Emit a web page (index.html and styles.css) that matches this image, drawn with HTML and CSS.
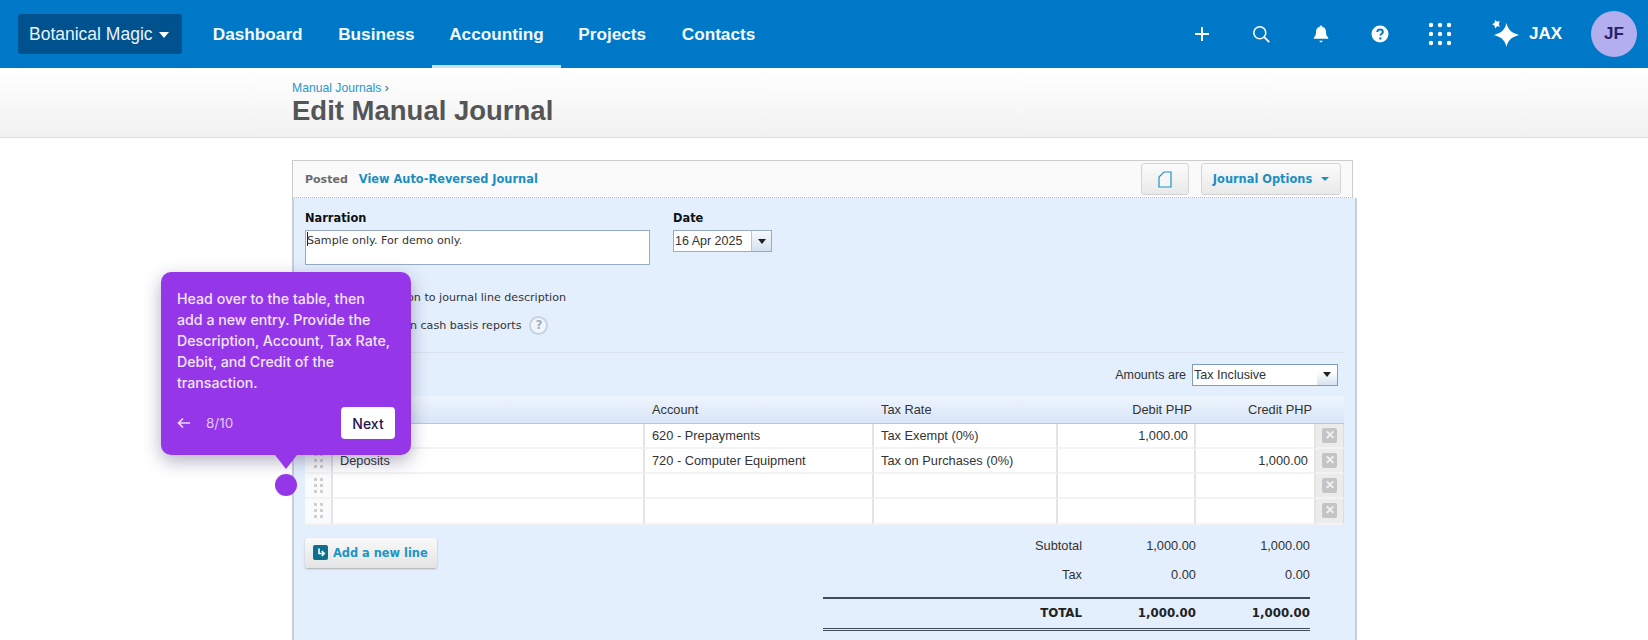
FILE: index.html
```html
<!DOCTYPE html>
<html lang="en">
<head>
<meta charset="utf-8">
<title>Edit Manual Journal</title>
<link rel="stylesheet" href="styles.css">
</head>
<body>
<header class="nav">
  <button class="org">Botanical Magic <span class="org-caret"></span></button>
  <nav class="menu">
    <a class="menu-item">Dashboard</a>
    <a class="menu-item">Business</a>
    <a class="menu-item active">Accounting</a>
    <a class="menu-item">Projects</a>
    <a class="menu-item">Contacts</a>
  </nav>
  <div class="tools">
    <svg class="tool t-plus" width="18" height="18" viewBox="0 0 18 18"><path d="M9 2v14M2 9h14" stroke="#fff" stroke-width="2" fill="none"/></svg>
    <svg class="tool t-search" width="20" height="20" viewBox="0 0 20 20"><circle cx="8.8" cy="8.8" r="6" stroke="#fff" stroke-width="1.6" fill="none"/><path d="M13.2 13.2l5 5" stroke="#fff" stroke-width="1.8" fill="none"/></svg>
    <svg class="tool t-bell" width="18" height="20" viewBox="0 0 18 20"><path d="M9 1.5c.8 0 1.3.6 1.3 1.3 2.6.6 3.7 2.6 3.7 5.2 0 3 .8 4.2 2.2 5.6v1.2H1.8v-1.2C3.200 12.200 4 11 4 8c0-2.600 1.100-4.600 3.700-5.200C7.700 2.100 8.200 1.500 9 1.500z" fill="#fff"/><path d="M7.300 16.800h3.400c-.2.900-.9 1.500-1.700 1.500s-1.500-.6-1.700-1.500z" fill="#fff"/></svg>
    <svg class="tool t-help" width="18" height="18" viewBox="0 0 18 18"><circle cx="9" cy="9" r="8.500" fill="#fff"/><path d="M6.300 7c.1-1.600 1.200-2.400 2.700-2.400s2.800.9 2.800 2.300c0 1.900-2.400 1.900-2.400 3.700" stroke="#0078c8" stroke-width="2" fill="none"/><circle cx="9.300" cy="13.400" r="1.200" fill="#0078c8"/></svg>
    <svg class="tool t-grid" width="24" height="24" viewBox="0 0 24 24" fill="#fff"><circle cx="3" cy="3" r="2.200"/><circle cx="12" cy="3" r="2.200"/><circle cx="21" cy="3" r="2.200"/><circle cx="3" cy="12" r="2.200"/><circle cx="12" cy="12" r="2.200"/><circle cx="21" cy="12" r="2.200"/><circle cx="3" cy="21" r="2.200"/><circle cx="12" cy="21" r="2.200"/><circle cx="21" cy="21" r="2.200"/></svg>
    <svg class="tool t-spark" width="28" height="28" viewBox="0 0 28 28" fill="#fff"><path d="M15.500 3c1.500 6.500 4.500 9.800 12.500 12-8 2.200-11 5.500-12.500 12-1.500-6.500-4.500-9.800-12.500-12 8-2.200 11-5.500 12.500-12z"/><path d="M4 0l1.800 1.500L8.800 1.200 7.700 4.300 9 6.500 6 6.200 4.300 8.500 3.400 5.500 1 4.200 3.600 3z"/></svg>
    <span class="jax">JAX</span>
    <span class="avatar">JF</span>
  </div>
</header>

<section class="pagehead">
  <div class="crumb"><a>Manual Journals</a> <span>›</span></div>
  <h1 class="title">Edit Manual Journal</h1>
</section>

<main class="main">
  <div class="toolbar">
    <span class="status">Posted</span>
    <a class="link">View Auto-Reversed Journal</a>
    <button class="btn btn-doc"><svg width="14" height="17" viewBox="0 0 14 17"><path d="M6 1h7v15H1V6z" fill="#f6f6f6" stroke="#1b95c6" stroke-width="1.200"/></svg></button>
    <button class="btn btn-options">Journal Options <span class="blue-caret"></span></button>
  </div>

  <div class="panel">
    <div class="fields">
      <div class="field">
        <label class="label">Narration</label>
        <div class="textarea"><span class="caret"></span>Sample only. For demo only.</div>
      </div>
      <div class="field">
        <label class="label">Date</label>
        <div class="date"><span class="date-val">16 Apr 2025</span><span class="date-btn"><span class="dark-caret"></span></span></div>
      </div>
    </div>

    <div class="check check-one"><span class="box"></span>Default narration to journal line description</div>
    <div class="check check-two"><span class="box"></span>Show journal on cash basis reports <span class="qmark">?</span></div>

    <div class="amounts">
      <span>Amounts are</span>
      <div class="select"><span>Tax Inclusive</span><span class="select-btn"><span class="dark-caret"></span></span></div>
    </div>

    <div class="grid-wrap">
      <div class="row head">
        <div class="c"></div><div class="c">Description</div><div class="c">Account</div><div class="c">Tax Rate</div><div class="c num">Debit PHP</div><div class="c num">Credit PHP</div><div class="c"></div>
      </div>
      <div class="row line">
        <div class="c handle"><i></i></div><div class="c">Prepayment</div><div class="c">620 - Prepayments</div><div class="c">Tax Exempt (0%)</div><div class="c num">1,000.00</div><div class="c num"></div><div class="c del"><b>✕</b></div>
      </div>
      <div class="row line">
        <div class="c handle"><i></i></div><div class="c">Deposits</div><div class="c">720 - Computer Equipment</div><div class="c">Tax on Purchases (0%)</div><div class="c num"></div><div class="c num">1,000.00</div><div class="c del"><b>✕</b></div>
      </div>
      <div class="row line">
        <div class="c handle"><i></i></div><div class="c"></div><div class="c"></div><div class="c"></div><div class="c num"></div><div class="c num"></div><div class="c del"><b>✕</b></div>
      </div>
      <div class="row line">
        <div class="c handle"><i></i></div><div class="c"></div><div class="c"></div><div class="c"></div><div class="c num"></div><div class="c num"></div><div class="c del"><b>✕</b></div>
      </div>
    </div>

    <div class="below">
      <button class="add"><svg width="15" height="15" viewBox="0 0 15 15"><rect width="15" height="15" rx="2" fill="#0e6f8f"/><path d="M6 3.500v5h5M8.800 6l2.500 2.500-2.500 2.500" stroke="#fff" stroke-width="1.600" fill="none"/></svg>Add a new line</button>
      <div class="totals">
        <div class="t-row"><span>Subtotal</span><span>1,000.00</span><span>1,000.00</span></div>
        <div class="t-row"><span>Tax</span><span>0.00</span><span>0.00</span></div>
        <div class="t-row t-total"><span>TOTAL</span><span>1,000.00</span><span>1,000.00</span></div>
      </div>
    </div>
  </div>
</main>

<aside class="tip">
  <p class="tip-text">Head over to the table, then add a new entry. Provide the Description, Account, Tax Rate, Debit, and Credit of the transaction.</p>
  <div class="tip-foot">
    <svg width="14" height="12" viewBox="0 0 14 12"><path d="M6 1.500L1.500 6 6 10.500M1.500 6H13" stroke="#ecd9fb" stroke-width="1.700" fill="none"/></svg>
    <span class="tip-count">8/10</span>
    <button class="tip-next">Next</button>
  </div>
</aside>
<span class="tip-tail"></span>
<span class="tip-dot"></span>
</body>
</html>
```
FILE: styles.css
```css
* { box-sizing: border-box; }
html, body { margin: 0; padding: 0; height: 640px; overflow: hidden; background: #fff; }
body { font-family: "Liberation Sans", Arial, sans-serif; color: #333; position: relative; }
button { font-family: inherit; cursor: pointer; }

.nav { height: 68px; background: #0078c8; display: flex; align-items: center; padding-left: 18px; color: #fff; }
.org { width: 164px; height: 40px; background: #00528f; border: 0; border-radius: 3px; color: #e8f2fa; font-size: 17.5px; text-align: left; padding: 1px 0 0 11px; display: flex; align-items: center; gap: 6px; white-space: nowrap; }
.org-caret { width: 0; height: 0; border: 5.500px solid transparent; border-top: 6px solid #fff; border-bottom: 0; }
.menu { display: flex; height: 68px; margin-left: 13px; }
.menu-item { display: flex; align-items: center; padding: 0 17.800px; font-weight: 700; font-size: 17.200px; color: #f2f8fc; height: 68px; white-space: nowrap; }
.menu-item.active { box-shadow: inset 0 -3px 0 #c8e0f6; padding: 0 16.800px; }
.tools { margin-left: auto; display: flex; align-items: center; height: 68px; padding-right: 11px; }
.tool { display: block; flex: none; }
.t-plus { margin-right: 40px; }
.t-search { margin-right: 41px; }
.t-bell { margin-right: 41px; }
.t-help { margin-right: 39px; }
.t-grid { margin-right: 39px; }
.t-spark { margin-right: 10px; }
.jax { font-weight: 700; font-size: 17px; color: #fff; margin-right: 29px; }
.avatar { width: 46px; height: 46px; border-radius: 50%; background: #b3aeee; color: #2b2068; font-weight: 700; font-size: 17px; display: flex; align-items: center; justify-content: center; }

.pagehead { height: 70px; padding: 12px 0 0 292px; background: linear-gradient(#fff, #f1f1f1); border-bottom: 1px solid #dcdcdc; }
.crumb { font-size: 12.200px; line-height: 16px; color: #555; }
.crumb a { color: #2a97cf; }
.title { margin: 0; font-size: 27.500px; line-height: 30px; font-weight: 700; color: #555; }

.main { margin-left: 292px; padding-top: 22px; width: 1065px; }
.toolbar { width: 1061px; height: 38px; background: #fafafa; border: 1px solid #ccc; border-bottom: 1px dotted #bbb; display: flex; align-items: center; padding: 0 0 0 12px; font-family: "DejaVu Sans", Verdana, sans-serif; font-size: 11.400px; font-weight: 700; }
.status { color: #6b6b6b; font-size: 11px; }
.link { color: #1b8fc4; margin-left: 11px; }
.btn { height: 32px; border: 1px solid #d4d4d4; border-radius: 3px; background: linear-gradient(#fbfbfb, #e9e9e9); display: flex; align-items: center; justify-content: center; font: inherit; color: #1b8fc4; padding: 0; }
.btn-doc { width: 48px; margin-left: auto; }
.btn-options { width: 140px; margin-left: 12px; margin-right: 11px; gap: 9px; }
.blue-caret { width: 0; height: 0; border: 4px solid transparent; border-top: 4px solid #1b8fc4; border-bottom: 0; }

.panel { height: 442px; background: #e4effd; border-left: 2px solid #c6ced9; border-right: 2px solid #c6ced9; padding: 13px 10px 0 11px; font-size: 12px; }
.fields { display: flex; gap: 23px; font-family: "DejaVu Sans", Verdana, sans-serif; }
.label { display: block; font-weight: 700; font-size: 11.400px; line-height: 14px; color: #111; margin-bottom: 5px; }
.textarea { width: 345px; height: 35px; background: #fff; border: 1px solid #97abc4; font-size: 11.100px; line-height: 16px; padding: 1px 0 0 1px; color: #333; }
.caret { display: inline-block; width: 1px; height: 14px; background: #222; vertical-align: -2px; margin-right: -1px; }
.date { width: 99px; height: 22px; background: #fff; border: 1px solid #97abc4; display: flex; font-family: "Liberation Sans", Arial, sans-serif; font-size: 12.500px; line-height: 20px; }
.date-val { flex: 1; padding-left: 1px; white-space: nowrap; }
.date-btn { width: 20px; background: linear-gradient(#f7fafd, #d5e1ee); border-left: 1px solid #b7c6d6; display: flex; align-items: center; justify-content: center; }
.dark-caret { width: 0; height: 0; border: 4.500px solid transparent; border-top: 5px solid #222; border-bottom: 0; }

.check { display: flex; align-items: center; gap: 6px; font-family: "DejaVu Sans", Verdana, sans-serif; font-size: 11.100px; height: 20px; color: #333; white-space: nowrap; }
.check-one { margin-top: 22px; gap: 8px; }
.check-two { margin-top: 8px; gap: 10px; }
.box { width: 13px; height: 13px; background: #fff; border: 1px solid #999; }
.qmark { width: 19px; height: 19px; border-radius: 50%; background: #f1f5fa; border: 2px solid #c5d2e0; color: #9fb0c0; font-size: 12px; font-weight: 700; line-height: 15px; text-align: center; margin-left: -2px; }

.amounts { margin-top: 17px; border-top: 1px solid #d8e1ec; height: 44px; display: flex; justify-content: flex-end; align-items: center; gap: 6px; font-size: 12.500px; padding: 0 7px 0 0; }
.select { width: 146px; height: 22px; background: #fff; border: 1px solid #7f9cbd; display: flex; justify-content: space-between; align-items: center; padding-left: 1px; font-size: 12.600px; }
.select-btn { width: 20px; height: 20px; background: linear-gradient(#fff 30%, #d7e3f0); display: flex; align-items: center; justify-content: center; }

.grid-wrap { width: 1039px; }
.row { display: grid; grid-template-columns: 28px 312px 229px 184px 138px 120px 28px; font-size: 12.800px; color: #333; }
.head { height: 27.500px; background: linear-gradient(#eef5fd, #d8e6f7); border-bottom: 1px solid #b9c7d8; align-items: center; }
.head .c { padding: 0 6px 0 7px; }
.head .num { padding-right: 4px; }
.line { height: 25.250px; background: #fff; }
.line .c { border-right: 2px solid #e4e4e4; border-bottom: 2px solid #f3f3f3; padding: 0 6px 0 7px; display: flex; align-items: center; line-height: 23px; }
.num { text-align: right; justify-content: flex-end; }
.line .handle { padding: 0; justify-content: center; background: #fafbfc; }
.handle i { width: 3px; height: 3px; background: #cfcfcf; box-shadow: 6px 0 #cfcfcf, 0 6px #cfcfcf, 6px 6px #cfcfcf, 0 12px #cfcfcf, 6px 12px #cfcfcf; margin: -12px 6px 0 0; }
.line .del { background: #ececec; border-right: 1px solid #ddd; padding: 0; justify-content: center; }
.del b { width: 15px; height: 15px; background: #c4c4c4; border-radius: 2px; color: #f2f2f2; font-size: 12px; line-height: 15px; text-align: center; font-weight: 700; }

.below { position: relative; display: flex; justify-content: space-between; align-items: flex-start; width: 1041px; }
.add { margin-top: 13px; width: 132px; height: 30px; border: 0; border-radius: 3px; background: linear-gradient(#f9f9f9, #e4e4e4); box-shadow: 0 1px 2px #aaa; display: flex; align-items: center; gap: 5px; padding: 0 0 0 8px; font-family: "DejaVu Sans", Verdana, sans-serif; font-weight: 700; font-size: 11.400px; color: #1b95c6; white-space: nowrap; }
.totals { width: 487px; margin-right: 36px; padding-top: 6px; font-size: 12.800px; color: #333; }
.t-row { display: grid; grid-template-columns: 259px 114px 114px; height: 29px; align-items: center; text-align: right; }
.t-total { height: 34px; margin-top: 8px; border-top: 2px solid #3d4a5a; border-bottom: 3px double #3d4a5a; font-weight: 700; font-family: "DejaVu Sans", Verdana, sans-serif; font-size: 11.800px; color: #222; }

.tip { position: absolute; left: 161px; top: 272px; width: 250px; height: 183px; background: #9537e8; border-radius: 10px; padding: 16px 16px 0; box-shadow: 0 6px 18px rgba(40,30,80,.35); color: #f1e4fd; }
.tip-text { margin: 0; width: 215px; font-family: Inter, "Open Sans", sans-serif; font-size: 14.200px; line-height: 21px; font-weight: 500; height: 119px; }
.tip-foot { display: flex; align-items: center; gap: 15px; font-family: Inter, sans-serif; }
.tip-count { font-size: 13.500px; color: #e2c9f8; }
.tip-next { margin-left: auto; width: 54px; height: 32px; background: #fff; border: 0; border-radius: 4px; color: #1e1450; font-size: 14px; font-weight: 500; font-family: Inter, sans-serif; padding: 0; }
.tip-tail { position: absolute; left: 275px; top: 455px; width: 0; height: 0; border-left: 11px solid transparent; border-right: 11px solid transparent; border-top: 14px solid #9537e8; }
.tip-dot { position: absolute; left: 275px; top: 474px; width: 22px; height: 22px; border-radius: 50%; background: #9537e8; }
```
